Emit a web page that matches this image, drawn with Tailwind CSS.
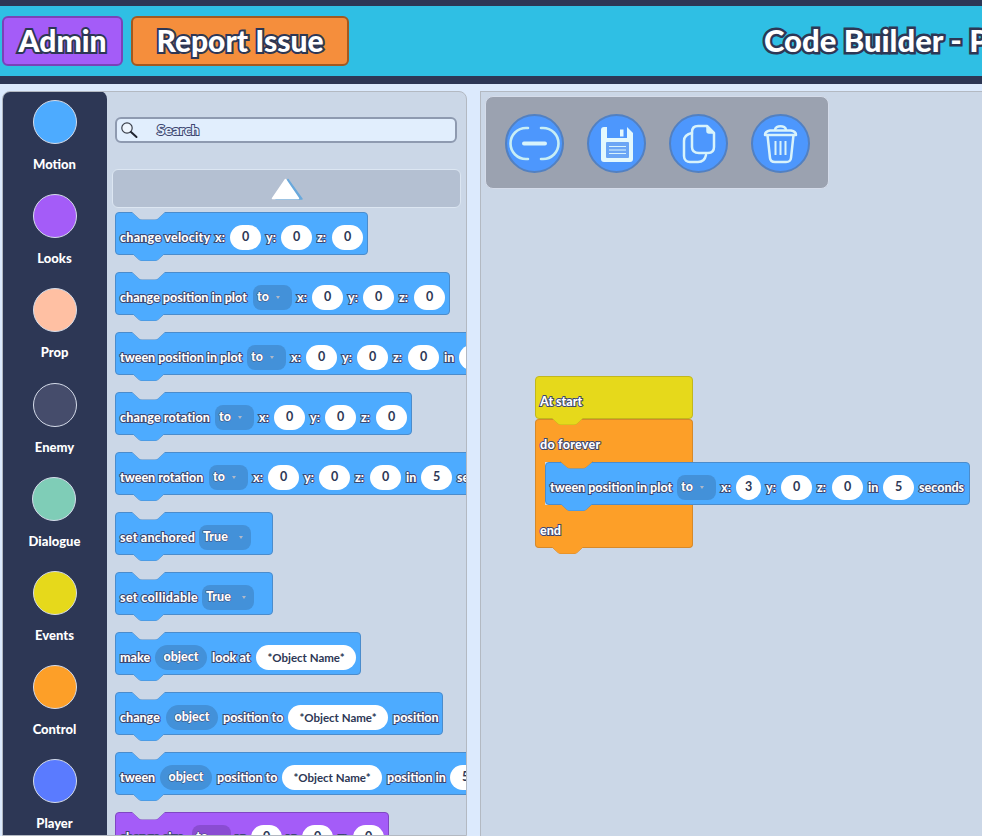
<!DOCTYPE html>
<html lang="en">
<head>
<meta charset="utf-8">
<title>Code Builder</title>
<script src="https://cdn.jsdelivr.net/npm/@tailwindcss/browser@4"></script>
</head>
<body class="bg-[#dceafd] font-['Lato',sans-serif]">
<div class="w-[982px] h-[836px] overflow-hidden flex flex-col">
  <header class="shrink-0 h-[84px] bg-[#2fbfe4] border-t-[6px] border-b-[8px] border-[#2d3755] flex items-center pl-[2px] pb-[1px] overflow-hidden">
    <div class="shrink-0 w-[121px] h-[50px] rounded-[6px] border-2 border-[#7a42b8] bg-[#a45cf8] flex items-center justify-center text-[30px] font-black text-white [-webkit-text-stroke:4px_#2d3755] [paint-order:stroke_fill]">Admin</div>
    <div class="shrink-0 ml-[8px] w-[218px] h-[50px] rounded-[6px] border-2 border-[#a3591f] bg-[#f58e3c] flex items-center justify-center text-[30px] font-black text-white [-webkit-text-stroke:4px_#2d3755] [paint-order:stroke_fill] whitespace-nowrap">Report Issue</div>
    <div class="shrink-0 ml-[415px] text-[31px] font-black text-white [-webkit-text-stroke:5px_#2d3755] [paint-order:stroke_fill] whitespace-nowrap">Code Builder - Plot</div>
  </header>

  <main class="flex-1 min-h-0 flex pt-[7px] pl-[2px]">
    <section class="shrink-0 w-[465px] flex rounded-t-[8px] border border-[#b3b9c2] bg-[#cbd7e7] overflow-hidden">
      <nav class="shrink-0 w-[105px] bg-[#2d3755] rounded-tr-[8px] pt-[9px] -ml-px -mt-px flex flex-col items-center text-[13px] font-black text-white">
        <div class="shrink-0 h-[94.2px] flex flex-col items-center"><div class="w-[44px] h-[44px] rounded-full border border-[#d5dcea] bg-[#4dabff]"></div><div class="mt-[11px] leading-[18px]">Motion</div></div>
        <div class="shrink-0 h-[94.2px] flex flex-col items-center"><div class="w-[44px] h-[44px] rounded-full border border-[#d5dcea] bg-[#a45cf8]"></div><div class="mt-[11px] leading-[18px]">Looks</div></div>
        <div class="shrink-0 h-[94.2px] flex flex-col items-center"><div class="w-[44px] h-[44px] rounded-full border border-[#d5dcea] bg-[#ffc0a3]"></div><div class="mt-[11px] leading-[18px]">Prop</div></div>
        <div class="shrink-0 h-[94.2px] flex flex-col items-center"><div class="w-[44px] h-[44px] rounded-full border border-[#d5dcea] bg-[#454c6b]"></div><div class="mt-[11px] leading-[18px]">Enemy</div></div>
        <div class="shrink-0 h-[94.2px] flex flex-col items-center"><div class="w-[44px] h-[44px] rounded-full border border-[#d5dcea] bg-[#7fcdb7]"></div><div class="mt-[11px] leading-[18px]">Dialogue</div></div>
        <div class="shrink-0 h-[94.2px] flex flex-col items-center"><div class="w-[44px] h-[44px] rounded-full border border-[#d5dcea] bg-[#e6d91b]"></div><div class="mt-[11px] leading-[18px]">Events</div></div>
        <div class="shrink-0 h-[94.2px] flex flex-col items-center"><div class="w-[44px] h-[44px] rounded-full border border-[#d5dcea] bg-[#fd9f28]"></div><div class="mt-[11px] leading-[18px]">Control</div></div>
        <div class="shrink-0 h-[94.2px] flex flex-col items-center"><div class="w-[44px] h-[44px] rounded-full border border-[#d5dcea] bg-[#5a7bff]"></div><div class="mt-[11px] leading-[18px]">Player</div></div>
      </nav>

      <div class="flex-1 min-w-0 overflow-hidden text-[12.5px] font-black text-white">
        <div class="ml-[8px] mt-[25px] w-[342px] h-[26px] rounded-[6px] border-2 border-[#8e9ab0] bg-[#e1eefd] flex items-center pl-[3px]">
          <svg class="w-[18px] h-[18px] shrink-0" viewBox="0 0 18 18" fill="none"><circle cx="7" cy="7" r="5.2" stroke="#3a3f4a" stroke-width="1.2" fill="#eef5fd"/><path d="M11 11l5.5 5" stroke="#1f2430" stroke-width="2" stroke-linecap="round"/></svg>
          <span class="ml-[19px] -mt-[1px] text-[14px] text-[#e1eefd] [-webkit-text-stroke:2px_#3d4770] [paint-order:stroke_fill]">Search</span>
        </div>
        <div class="ml-[5px] mt-[26px] w-[349px] h-[39px] rounded-[6px] border border-[#dce6f2] bg-[#b4c0d2] flex items-center justify-center">
          <svg width="32" height="22" viewBox="0 0 32 22"><path d="M17 1.500 L31 21 H5 Z" fill="#6aa9dc" stroke="#6aa9dc" stroke-linejoin="round" stroke-width="1.500"/><path d="M14.500 1.500 L27.500 20.500 H1.500 Z" fill="#fff" stroke="#fff" stroke-linejoin="round" stroke-width="1.500"/></svg>
        </div>

        <div class="ml-[8px] mt-[4px] [&>div]:shrink-0">
          <!-- Block 1 -->
          <div class="relative mb-[17px] w-[253px] h-[43px] flex items-center pl-[4px] pt-[10px] rounded-[4px] border border-[#4b8ccc] bg-[#4dabff] [-webkit-text-stroke:2px_#3d4770] [paint-order:stroke_fill] whitespace-nowrap">
            <svg class="absolute -top-px left-[16px]" width="33" height="9" viewBox="0 0 33 9"><path d="M0 0 L7 6.5 Q8 7.5 10 7.5 H23 Q25 7.5 26 6.5 L33 0 Z" fill="#cbd7e7" stroke="#4b8ccc"/></svg>
            <svg class="absolute -bottom-[8px] left-[16px]" width="33" height="9" viewBox="0 0 33 9"><path d="M0 0 L7 6.5 Q8 7.5 10 7.5 H23 Q25 7.5 26 6.5 L33 0 Z" fill="#4dabff" stroke="#4b8ccc"/><path d="M0 0H33" stroke="#4dabff" stroke-width="2"/></svg>
            <span class="w-[91px] mr-[4px] tracking-[0.25px]">change velocity</span>
            <span class="w-[11px] mr-[4px]">x:</span><span class="w-[31px] h-[25px] -mt-[2px] rounded-full bg-white flex items-center justify-center text-[#2d3755] font-bold [-webkit-text-stroke:0]">0</span>
            <span class="w-[11px] mx-[5px] mr-[4px]">y:</span><span class="w-[31px] h-[25px] -mt-[2px] rounded-full bg-white flex items-center justify-center text-[#2d3755] font-bold [-webkit-text-stroke:0]">0</span>
            <span class="w-[11px] mx-[5px] mr-[4px]">z:</span><span class="w-[31px] h-[25px] -mt-[2px] rounded-full bg-white flex items-center justify-center text-[#2d3755] font-bold [-webkit-text-stroke:0]">0</span>
          </div>
          <!-- Block 2 -->
          <div class="relative mb-[17px] w-[335px] h-[43px] flex items-center pl-[4px] pt-[10px] rounded-[4px] border border-[#4b8ccc] bg-[#4dabff] [-webkit-text-stroke:2px_#3d4770] [paint-order:stroke_fill] whitespace-nowrap">
            <svg class="absolute -top-px left-[16px]" width="33" height="9" viewBox="0 0 33 9"><path d="M0 0 L7 6.5 Q8 7.5 10 7.5 H23 Q25 7.5 26 6.5 L33 0 Z" fill="#cbd7e7" stroke="#4b8ccc"/></svg>
            <svg class="absolute -bottom-[8px] left-[16px]" width="33" height="9" viewBox="0 0 33 9"><path d="M0 0 L7 6.5 Q8 7.5 10 7.5 H23 Q25 7.5 26 6.5 L33 0 Z" fill="#4dabff" stroke="#4b8ccc"/><path d="M0 0H33" stroke="#4dabff" stroke-width="2"/></svg>
            <span class="w-[128px] mr-[5px]">change position in plot</span>
            <span class="relative w-[39px] h-[25px] -mt-[2px] rounded-[8px] bg-[#4391d9] pl-[4px] leading-[23px] [-webkit-text-stroke:1px_#3d4770]">to<i class="absolute right-[12px] top-[11px] border-x-[2px] border-t-[3px] border-x-transparent border-t-[#b0b8c8]"></i></span>
            <span class="w-[11px] mx-[5px] mr-[4px]">x:</span><span class="w-[31px] h-[25px] -mt-[2px] rounded-full bg-white flex items-center justify-center text-[#2d3755] font-bold [-webkit-text-stroke:0]">0</span>
            <span class="w-[11px] mx-[5px] mr-[4px]">y:</span><span class="w-[31px] h-[25px] -mt-[2px] rounded-full bg-white flex items-center justify-center text-[#2d3755] font-bold [-webkit-text-stroke:0]">0</span>
            <span class="w-[11px] mx-[5px] mr-[4px]">z:</span><span class="w-[31px] h-[25px] -mt-[2px] rounded-full bg-white flex items-center justify-center text-[#2d3755] font-bold [-webkit-text-stroke:0]">0</span>
          </div>
          <!-- Block 3 -->
          <div class="relative mb-[17px] w-[425px] h-[43px] flex items-center pl-[4px] pt-[10px] rounded-[4px] border border-[#4b8ccc] bg-[#4dabff] [-webkit-text-stroke:2px_#3d4770] [paint-order:stroke_fill] whitespace-nowrap">
            <svg class="absolute -top-px left-[16px]" width="33" height="9" viewBox="0 0 33 9"><path d="M0 0 L7 6.5 Q8 7.5 10 7.5 H23 Q25 7.5 26 6.5 L33 0 Z" fill="#cbd7e7" stroke="#4b8ccc"/></svg>
            <svg class="absolute -bottom-[8px] left-[16px]" width="33" height="9" viewBox="0 0 33 9"><path d="M0 0 L7 6.5 Q8 7.5 10 7.5 H23 Q25 7.5 26 6.5 L33 0 Z" fill="#4dabff" stroke="#4b8ccc"/><path d="M0 0H33" stroke="#4dabff" stroke-width="2"/></svg>
            <span class="w-[122px] mr-[5px]">tween position in plot</span>
            <span class="relative w-[39px] h-[25px] -mt-[2px] rounded-[8px] bg-[#4391d9] pl-[4px] leading-[23px] [-webkit-text-stroke:1px_#3d4770]">to<i class="absolute right-[12px] top-[11px] border-x-[2px] border-t-[3px] border-x-transparent border-t-[#b0b8c8]"></i></span>
            <span class="w-[11px] mx-[5px] mr-[4px]">x:</span><span class="w-[31px] h-[25px] -mt-[2px] rounded-full bg-white flex items-center justify-center text-[#2d3755] font-bold [-webkit-text-stroke:0]">0</span>
            <span class="w-[11px] mx-[5px] mr-[4px]">y:</span><span class="w-[31px] h-[25px] -mt-[2px] rounded-full bg-white flex items-center justify-center text-[#2d3755] font-bold [-webkit-text-stroke:0]">0</span>
            <span class="w-[11px] mx-[5px] mr-[4px]">z:</span><span class="w-[31px] h-[25px] -mt-[2px] rounded-full bg-white flex items-center justify-center text-[#2d3755] font-bold [-webkit-text-stroke:0]">0</span>
            <span class="w-[11px] mx-[5px] mr-[4px]">in</span><span class="shrink-0 w-[31px] h-[25px] -mt-[2px] rounded-full bg-white flex items-center justify-center text-[#2d3755] font-bold [-webkit-text-stroke:0]">5</span>
          </div>
          <!-- Block 4 -->
          <div class="relative mb-[17px] w-[297px] h-[43px] flex items-center pl-[4px] pt-[10px] rounded-[4px] border border-[#4b8ccc] bg-[#4dabff] [-webkit-text-stroke:2px_#3d4770] [paint-order:stroke_fill] whitespace-nowrap">
            <svg class="absolute -top-px left-[16px]" width="33" height="9" viewBox="0 0 33 9"><path d="M0 0 L7 6.5 Q8 7.5 10 7.5 H23 Q25 7.5 26 6.5 L33 0 Z" fill="#cbd7e7" stroke="#4b8ccc"/></svg>
            <svg class="absolute -bottom-[8px] left-[16px]" width="33" height="9" viewBox="0 0 33 9"><path d="M0 0 L7 6.5 Q8 7.5 10 7.5 H23 Q25 7.5 26 6.5 L33 0 Z" fill="#4dabff" stroke="#4b8ccc"/><path d="M0 0H33" stroke="#4dabff" stroke-width="2"/></svg>
            <span class="w-[90px] mr-[5px] tracking-[0.15px]">change rotation</span>
            <span class="relative w-[39px] h-[25px] -mt-[2px] rounded-[8px] bg-[#4391d9] pl-[4px] leading-[23px] [-webkit-text-stroke:1px_#3d4770]">to<i class="absolute right-[12px] top-[11px] border-x-[2px] border-t-[3px] border-x-transparent border-t-[#b0b8c8]"></i></span>
            <span class="w-[11px] mx-[5px] mr-[4px]">x:</span><span class="w-[31px] h-[25px] -mt-[2px] rounded-full bg-white flex items-center justify-center text-[#2d3755] font-bold [-webkit-text-stroke:0]">0</span>
            <span class="w-[11px] mx-[5px] mr-[4px]">y:</span><span class="w-[31px] h-[25px] -mt-[2px] rounded-full bg-white flex items-center justify-center text-[#2d3755] font-bold [-webkit-text-stroke:0]">0</span>
            <span class="w-[11px] mx-[5px] mr-[4px]">z:</span><span class="w-[31px] h-[25px] -mt-[2px] rounded-full bg-white flex items-center justify-center text-[#2d3755] font-bold [-webkit-text-stroke:0]">0</span>
          </div>
          <!-- Block 5 -->
          <div class="relative mb-[17px] w-[425px] h-[43px] flex items-center pl-[4px] pt-[10px] rounded-[4px] border border-[#4b8ccc] bg-[#4dabff] [-webkit-text-stroke:2px_#3d4770] [paint-order:stroke_fill] whitespace-nowrap">
            <svg class="absolute -top-px left-[16px]" width="33" height="9" viewBox="0 0 33 9"><path d="M0 0 L7 6.5 Q8 7.5 10 7.5 H23 Q25 7.5 26 6.5 L33 0 Z" fill="#cbd7e7" stroke="#4b8ccc"/></svg>
            <svg class="absolute -bottom-[8px] left-[16px]" width="33" height="9" viewBox="0 0 33 9"><path d="M0 0 L7 6.5 Q8 7.5 10 7.5 H23 Q25 7.5 26 6.5 L33 0 Z" fill="#4dabff" stroke="#4b8ccc"/><path d="M0 0H33" stroke="#4dabff" stroke-width="2"/></svg>
            <span class="w-[84px] mr-[5px]">tween rotation</span>
            <span class="relative w-[39px] h-[25px] -mt-[2px] rounded-[8px] bg-[#4391d9] pl-[4px] leading-[23px] [-webkit-text-stroke:1px_#3d4770]">to<i class="absolute right-[12px] top-[11px] border-x-[2px] border-t-[3px] border-x-transparent border-t-[#b0b8c8]"></i></span>
            <span class="w-[11px] mx-[5px] mr-[4px]">x:</span><span class="w-[31px] h-[25px] -mt-[2px] rounded-full bg-white flex items-center justify-center text-[#2d3755] font-bold [-webkit-text-stroke:0]">0</span>
            <span class="w-[11px] mx-[5px] mr-[4px]">y:</span><span class="w-[31px] h-[25px] -mt-[2px] rounded-full bg-white flex items-center justify-center text-[#2d3755] font-bold [-webkit-text-stroke:0]">0</span>
            <span class="w-[11px] mx-[5px] mr-[4px]">z:</span><span class="w-[31px] h-[25px] -mt-[2px] rounded-full bg-white flex items-center justify-center text-[#2d3755] font-bold [-webkit-text-stroke:0]">0</span>
            <span class="w-[11px] mx-[5px] mr-[4px]">in</span><span class="w-[31px] h-[25px] -mt-[2px] rounded-full bg-white flex items-center justify-center text-[#2d3755] font-bold [-webkit-text-stroke:0]">5</span>
            <span class="ml-[5px]">seconds</span>
          </div>
          <!-- Block 6 -->
          <div class="relative mb-[17px] w-[158px] h-[43px] flex items-center pl-[4px] pt-[10px] rounded-[4px] border border-[#4b8ccc] bg-[#4dabff] [-webkit-text-stroke:2px_#3d4770] [paint-order:stroke_fill] whitespace-nowrap">
            <svg class="absolute -top-px left-[16px]" width="33" height="9" viewBox="0 0 33 9"><path d="M0 0 L7 6.5 Q8 7.5 10 7.5 H23 Q25 7.5 26 6.5 L33 0 Z" fill="#cbd7e7" stroke="#4b8ccc"/></svg>
            <svg class="absolute -bottom-[8px] left-[16px]" width="33" height="9" viewBox="0 0 33 9"><path d="M0 0 L7 6.5 Q8 7.5 10 7.5 H23 Q25 7.5 26 6.5 L33 0 Z" fill="#4dabff" stroke="#4b8ccc"/><path d="M0 0H33" stroke="#4dabff" stroke-width="2"/></svg>
            <span class="w-[75px] mr-[4px] tracking-[0.25px]">set anchored</span>
            <span class="relative w-[52px] h-[25px] -mt-[2px] rounded-[8px] bg-[#4391d9] pl-[4px] leading-[23px] [-webkit-text-stroke:1px_#3d4770]">True<i class="absolute right-[8px] top-[11px] border-x-[2px] border-t-[3px] border-x-transparent border-t-[#b0b8c8]"></i></span>
          </div>
          <!-- Block 7 -->
          <div class="relative mb-[17px] w-[158px] h-[43px] flex items-center pl-[4px] pt-[10px] rounded-[4px] border border-[#4b8ccc] bg-[#4dabff] [-webkit-text-stroke:2px_#3d4770] [paint-order:stroke_fill] whitespace-nowrap">
            <svg class="absolute -top-px left-[16px]" width="33" height="9" viewBox="0 0 33 9"><path d="M0 0 L7 6.5 Q8 7.5 10 7.5 H23 Q25 7.5 26 6.5 L33 0 Z" fill="#cbd7e7" stroke="#4b8ccc"/></svg>
            <svg class="absolute -bottom-[8px] left-[16px]" width="33" height="9" viewBox="0 0 33 9"><path d="M0 0 L7 6.5 Q8 7.5 10 7.5 H23 Q25 7.5 26 6.5 L33 0 Z" fill="#4dabff" stroke="#4b8ccc"/><path d="M0 0H33" stroke="#4dabff" stroke-width="2"/></svg>
            <span class="w-[78px] mr-[4px] tracking-[0.35px]">set collidable</span>
            <span class="relative w-[52px] h-[25px] -mt-[2px] rounded-[8px] bg-[#4391d9] pl-[4px] leading-[23px] [-webkit-text-stroke:1px_#3d4770]">True<i class="absolute right-[8px] top-[11px] border-x-[2px] border-t-[3px] border-x-transparent border-t-[#b0b8c8]"></i></span>
          </div>
          <!-- Block 8 -->
          <div class="relative mb-[17px] w-[246px] h-[43px] flex items-center pl-[4px] pt-[10px] rounded-[4px] border border-[#4b8ccc] bg-[#4dabff] [-webkit-text-stroke:2px_#3d4770] [paint-order:stroke_fill] whitespace-nowrap">
            <svg class="absolute -top-px left-[16px]" width="33" height="9" viewBox="0 0 33 9"><path d="M0 0 L7 6.5 Q8 7.5 10 7.5 H23 Q25 7.5 26 6.5 L33 0 Z" fill="#cbd7e7" stroke="#4b8ccc"/></svg>
            <svg class="absolute -bottom-[8px] left-[16px]" width="33" height="9" viewBox="0 0 33 9"><path d="M0 0 L7 6.5 Q8 7.5 10 7.5 H23 Q25 7.5 26 6.5 L33 0 Z" fill="#4dabff" stroke="#4b8ccc"/><path d="M0 0H33" stroke="#4dabff" stroke-width="2"/></svg>
            <span class="w-[30px] mr-[5px]">make</span>
            <span class="w-[52px] h-[25px] -mt-[2px] rounded-full bg-[#4391d9] flex items-center justify-center [-webkit-text-stroke:1px_#3d4770]">object</span>
            <span class="w-[39px] mx-[5px]">look at</span>
            <span class="w-[100px] h-[25px] -mt-[2px] rounded-full bg-white flex items-center justify-center text-[11.5px] text-[#2d3755] font-bold [-webkit-text-stroke:0]">*Object Name*</span>
          </div>
          <!-- Block 9 -->
          <div class="relative mb-[17px] w-[328px] h-[43px] flex items-center pl-[4px] pt-[10px] rounded-[4px] border border-[#4b8ccc] bg-[#4dabff] [-webkit-text-stroke:2px_#3d4770] [paint-order:stroke_fill] whitespace-nowrap">
            <svg class="absolute -top-px left-[16px]" width="33" height="9" viewBox="0 0 33 9"><path d="M0 0 L7 6.5 Q8 7.5 10 7.5 H23 Q25 7.5 26 6.5 L33 0 Z" fill="#cbd7e7" stroke="#4b8ccc"/></svg>
            <svg class="absolute -bottom-[8px] left-[16px]" width="33" height="9" viewBox="0 0 33 9"><path d="M0 0 L7 6.5 Q8 7.5 10 7.5 H23 Q25 7.5 26 6.5 L33 0 Z" fill="#4dabff" stroke="#4b8ccc"/><path d="M0 0H33" stroke="#4dabff" stroke-width="2"/></svg>
            <span class="w-[41px] mr-[5px]">change</span>
            <span class="w-[52px] h-[25px] -mt-[2px] rounded-full bg-[#4391d9] flex items-center justify-center [-webkit-text-stroke:1px_#3d4770]">object</span>
            <span class="w-[60px] mx-[5px]">position to</span>
            <span class="w-[100px] h-[25px] -mt-[2px] rounded-full bg-white flex items-center justify-center text-[11.5px] text-[#2d3755] font-bold [-webkit-text-stroke:0]">*Object Name*</span>
            <span class="ml-[5px]">position</span>
          </div>
          <!-- Block 10 -->
          <div class="relative mb-[17px] w-[425px] h-[43px] flex items-center pl-[4px] pt-[10px] rounded-[4px] border border-[#4b8ccc] bg-[#4dabff] [-webkit-text-stroke:2px_#3d4770] [paint-order:stroke_fill] whitespace-nowrap">
            <svg class="absolute -top-px left-[16px]" width="33" height="9" viewBox="0 0 33 9"><path d="M0 0 L7 6.5 Q8 7.5 10 7.5 H23 Q25 7.5 26 6.5 L33 0 Z" fill="#cbd7e7" stroke="#4b8ccc"/></svg>
            <svg class="absolute -bottom-[8px] left-[16px]" width="33" height="9" viewBox="0 0 33 9"><path d="M0 0 L7 6.5 Q8 7.5 10 7.5 H23 Q25 7.5 26 6.5 L33 0 Z" fill="#4dabff" stroke="#4b8ccc"/><path d="M0 0H33" stroke="#4dabff" stroke-width="2"/></svg>
            <span class="w-[35px] mr-[5px]">tween</span>
            <span class="w-[52px] h-[25px] -mt-[2px] rounded-full bg-[#4391d9] flex items-center justify-center [-webkit-text-stroke:1px_#3d4770]">object</span>
            <span class="w-[60px] mx-[5px]">position to</span>
            <span class="w-[100px] h-[25px] -mt-[2px] rounded-full bg-white flex items-center justify-center text-[11.5px] text-[#2d3755] font-bold [-webkit-text-stroke:0]">*Object Name*</span>
            <span class="w-[58px] mx-[5px]">position in</span>
            <span class="shrink-0 w-[31px] h-[25px] -mt-[2px] rounded-full bg-white flex items-center justify-center text-[#2d3755] font-bold [-webkit-text-stroke:0]">5</span>
          </div>
          <!-- Block 11 -->
          <div class="relative w-[274px] h-[43px] flex items-center pl-[4px] pt-[10px] rounded-[4px] border border-[#7f47c2] bg-[#a45cf8] [-webkit-text-stroke:2px_#3d4770] [paint-order:stroke_fill] whitespace-nowrap">
            <svg class="absolute -top-px left-[16px]" width="33" height="9" viewBox="0 0 33 9"><path d="M0 0 L7 6.5 Q8 7.5 10 7.5 H23 Q25 7.5 26 6.5 L33 0 Z" fill="#cbd7e7" stroke="#7f47c2"/></svg>
            <span class="w-[67px] mr-[5px]">change size</span>
            <span class="relative w-[39px] h-[25px] -mt-[2px] rounded-[8px] bg-[#8a4cd2] pl-[4px] leading-[23px] [-webkit-text-stroke:1px_#3d4770]">to</span>
            <span class="w-[11px] mx-[5px] mr-[4px]">x:</span><span class="w-[31px] h-[25px] -mt-[2px] rounded-full bg-white flex items-center justify-center text-[#2d3755] font-bold [-webkit-text-stroke:0]">0</span>
            <span class="w-[11px] mx-[5px] mr-[4px]">y:</span><span class="w-[31px] h-[25px] -mt-[2px] rounded-full bg-white flex items-center justify-center text-[#2d3755] font-bold [-webkit-text-stroke:0]">0</span>
            <span class="w-[11px] mx-[5px] mr-[4px]">z:</span><span class="w-[31px] h-[25px] -mt-[2px] rounded-full bg-white flex items-center justify-center text-[#2d3755] font-bold [-webkit-text-stroke:0]">0</span>
          </div>
        </div>
      </div>
    </section>

    <section class="relative ml-[13px] flex-1 min-w-0 border-l border-t border-[#b3b9c2] bg-[#cbd7e7] overflow-hidden text-[12.5px] font-black text-white">
      <div class="ml-[4px] mt-[4px] w-[344px] h-[93px] rounded-[8px] border border-[#d5dcea] bg-[#9ba2b0] flex items-center pl-[18.5px] pt-[1px] gap-[23px]">
        <svg class="w-[59px] h-[59px] shrink-0" viewBox="0 0 59 59" fill="none"><circle cx="29.5" cy="29.5" r="28.5" fill="#4d97fd" stroke="#5280c1" stroke-width="2"/><path d="M23 14H21A15.500 15.500 0 0 0 21 45H23M36 14H38A15.500 15.500 0 0 1 38 45H36" stroke="#c8eef5" stroke-width="2.600" stroke-linecap="round"/><path d="M19 29.5H40" stroke="#d8f3fb" stroke-width="4" stroke-linecap="round"/></svg>
        <svg class="w-[59px] h-[59px] shrink-0" viewBox="0 0 59 59" fill="none"><circle cx="29.5" cy="29.5" r="28.5" fill="#4d97fd" stroke="#5280c1" stroke-width="2"/><path d="M17 13H40L46 19V45a3 3 0 0 1-3 3H17a3 3 0 0 1-3-3V16a3 3 0 0 1 3-3Z" fill="#e3f8fd"/><rect x="20" y="13" width="20" height="11" fill="#4d97fd"/><rect x="33" y="15.500" width="3.500" height="7" fill="#e3f8fd"/><rect x="19" y="28" width="23" height="16" rx="1" fill="#6ba6f5"/><path d="M22 32.500H39M22 36H39M22 39.500H39" stroke="#d8f3fb" stroke-width="1"/></svg>
        <svg class="w-[59px] h-[59px] shrink-0" viewBox="0 0 59 59" fill="none"><circle cx="29.5" cy="29.5" r="28.5" fill="#4d97fd" stroke="#5280c1" stroke-width="2"/><path d="M23 19C18 20 15 22 15 27V42C15 46 18 48 21 48H29C33 48 36 46 37 41" stroke="#d8f3fb" stroke-width="2.500" stroke-linecap="round"/><path d="M29 12H38L45 19V33C45 37 43 39 39 39H30C26 39 23 37 23 33V18C23 14 25 12 29 12Z" stroke="#d8f3fb" stroke-width="2.500" stroke-linejoin="round"/><path d="M38 12V17C38 18.500 39 19 40 19H45" fill="#d8f3fb" stroke="#d8f3fb" stroke-width="1.500"/></svg>
        <svg class="w-[59px] h-[59px] shrink-0" viewBox="0 0 59 59" fill="none"><circle cx="29.5" cy="29.5" r="28.500" fill="#4d97fd" stroke="#5280c1" stroke-width="2"/><path d="M24 16C24 11 35 11 35 16" stroke="#d8f3fb" stroke-width="2.500"/><path d="M14 21C14 18 16 17 19 16.500H40C43 17 45 18 45 21Z" stroke="#d8f3fb" stroke-width="2.500" stroke-linejoin="round"/><path d="M16.500 21L19 44C19.300 47 21 48 24 48H35C38 48 39.700 47 40 44L42.500 21" stroke="#d8f3fb" stroke-width="2.500"/><path d="M24.500 27V41M29.500 27V41M34.500 27V41" stroke="#d8f3fb" stroke-width="2"/></svg>
      </div>

      <!-- Free canvas: the stack's position is the content -->
      <div class="absolute left-[54px] top-[284px] w-[158px] [-webkit-text-stroke:2px_#3d4770] [paint-order:stroke_fill] whitespace-nowrap">
        <div class="relative z-30 w-[158px] h-[43px] flex items-center pl-[4px] pt-[10px] rounded-[4px] border border-[#c2b71c] bg-[#e6d91b]">
          <svg class="absolute -bottom-[8px] left-[15px]" width="33" height="9" viewBox="0 0 33 9"><path d="M0 0 L7 6.5 Q8 7.5 10 7.5 H23 Q25 7.5 26 6.5 L33 0 Z" fill="#e6d91b" stroke="#c2b71c"/><path d="M0 0H33" stroke="#e6d91b" stroke-width="2"/></svg>
          <span>At start</span>
        </div>
        <div class="relative z-20 w-[158px] h-[43px] flex items-center pl-[4px] pt-[9px] rounded-t-[4px] border-x border-t border-[#d6892a] bg-[#fd9f28]">
          <svg class="absolute -bottom-[7px] left-[24px]" width="33" height="8" viewBox="0 0 33 8"><path d="M0 0 L7 6 Q8 7 10 7 H23 Q25 7 26 6 L33 0 Z" fill="#fd9f28" stroke="#d6892a"/></svg>
          <span class="tracking-[0.25px]">do forever</span>
        </div>
        <div class="relative z-10 flex h-[43px]">
          <div class="shrink-0 w-[10px] bg-[#fd9f28] border-l border-[#d6892a]"></div>
          <div class="relative shrink-0 w-[425px] h-[43px] flex items-center pl-[4px] pt-[10px] rounded-[4px] border border-[#4b8ccc] bg-[#4dabff]">
            <svg class="absolute -bottom-[8px] left-[14px]" width="33" height="9" viewBox="0 0 33 9"><path d="M0 0 L7 6.5 Q8 7.5 10 7.5 H23 Q25 7.5 26 6.5 L33 0 Z" fill="#4dabff" stroke="#4b8ccc"/><path d="M0 0H33" stroke="#4dabff" stroke-width="2"/></svg>
            <span class="w-[122px] mr-[5px]">tween position in plot</span>
            <span class="relative w-[39px] h-[25px] -mt-[2px] rounded-[8px] bg-[#4391d9] pl-[4px] leading-[23px] [-webkit-text-stroke:1px_#3d4770]">to<i class="absolute right-[12px] top-[11px] border-x-[2px] border-t-[3px] border-x-transparent border-t-[#b0b8c8]"></i></span>
            <span class="w-[11px] mx-[5px] mr-[4px]">x:</span><span class="w-[25px] h-[25px] -mt-[2px] rounded-full bg-white flex items-center justify-center text-[#2d3755] font-bold [-webkit-text-stroke:0]">3</span>
            <span class="w-[11px] mx-[5px] mr-[4px]">y:</span><span class="w-[31px] h-[25px] -mt-[2px] rounded-full bg-white flex items-center justify-center text-[#2d3755] font-bold [-webkit-text-stroke:0]">0</span>
            <span class="w-[11px] mx-[5px] mr-[4px]">z:</span><span class="w-[31px] h-[25px] -mt-[2px] rounded-full bg-white flex items-center justify-center text-[#2d3755] font-bold [-webkit-text-stroke:0]">0</span>
            <span class="w-[11px] mx-[5px] mr-[4px]">in</span><span class="w-[31px] h-[25px] -mt-[2px] rounded-full bg-white flex items-center justify-center text-[#2d3755] font-bold [-webkit-text-stroke:0]">5</span>
            <span class="ml-[5px]">seconds</span>
          </div>
        </div>
        <div class="relative w-[158px] h-[43px] flex items-center pl-[4px] pt-[11px] rounded-b-[4px] border-x border-b border-[#d6892a] bg-[#fd9f28]">
          <svg class="absolute -bottom-[8px] left-[15px]" width="33" height="9" viewBox="0 0 33 9"><path d="M0 0 L7 6.5 Q8 7.5 10 7.5 H23 Q25 7.5 26 6.5 L33 0 Z" fill="#fd9f28" stroke="#d6892a"/><path d="M0 0H33" stroke="#fd9f28" stroke-width="2"/></svg>
          <span>end</span>
        </div>
      </div>
    </section>
  </main>
</div>
</body>
</html>
